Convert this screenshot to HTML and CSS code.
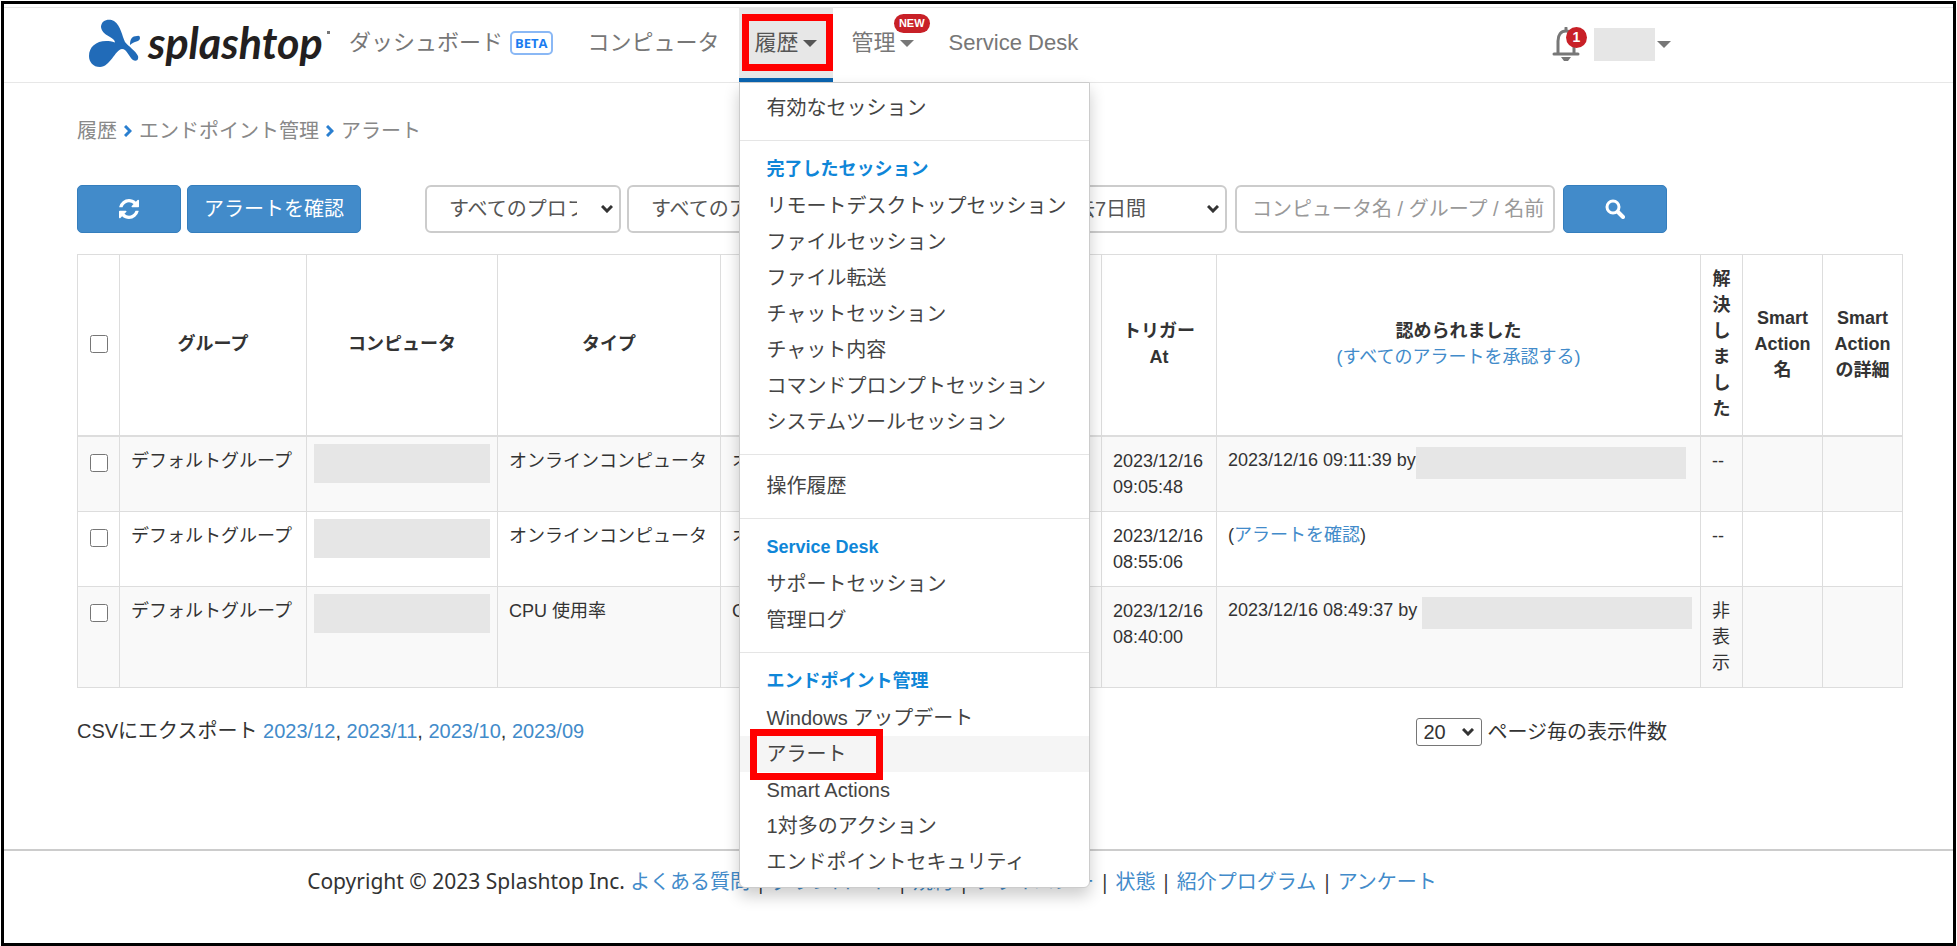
FILE: index.html
```html
<!DOCTYPE html>
<html lang="ja">
<head>
    <meta charset="utf-8">
    <title>アラート - Splashtop</title>
    <meta name="viewport" content="width=device-width, initial-scale=1">
    <link rel="stylesheet" href="styles.css">
</head>
<body>
<div class="page">
    <header class="navbar">
        <div class="navbar-inner">
            <a class="logo" href="#">
                <svg width="54" height="50" viewBox="0 0 54 50" aria-hidden="true">
                    <path fill="#216bb8" d="M1 37C1 26 12 19 27 23.500C27 18 14 17 13 8C13 1 21-1 26 2C33 7 34 17 37 23C40 27 48 32 50 37C51 41 48 43 45 41C41 38 39 30 34 30C27 31 22 48 12 48C5 48 1 43 1 37Z"/>
                    <path fill="#216bb8" d="M42 26C42 20 44 17 49 17Q52 16 52 19C52 23 46 22 42 26Z"/>
                </svg>
                <span class="logo-text">splashtop</span><span class="logo-dot"></span>
            </a>
            <nav class="nav">
                <a class="nav-link nav-dashboard" href="#">ダッシュボード<span class="beta">BETA</span></a>
                <a class="nav-link" href="#">コンピュータ</a>
                <div class="nav-item active">
                    <button class="nav-link" type="button" aria-expanded="true">履歴<span class="caret"></span></button>
                    <span class="mark mark-nav"></span>
                    <div class="dropdown">
                        <a href="#">有効なセッション</a>
                        <hr>
                        <h4>完了したセッション</h4>
                        <a href="#">リモートデスクトップセッション</a>
                        <a href="#">ファイルセッション</a>
                        <a href="#">ファイル転送</a>
                        <a href="#">チャットセッション</a>
                        <a href="#">チャット内容</a>
                        <a href="#">コマンドプロンプトセッション</a>
                        <a href="#">システムツールセッション</a>
                        <hr>
                        <a href="#">操作履歴</a>
                        <hr>
                        <h4>Service Desk</h4>
                        <a href="#">サポートセッション</a>
                        <a href="#">管理ログ</a>
                        <hr>
                        <h4>エンドポイント管理</h4>
                        <a href="#">Windows アップデート</a>
                        <a class="current" href="#">アラート<span class="mark mark-menu"></span></a>
                        <a href="#">Smart Actions</a>
                        <a href="#">1対多のアクション</a>
                        <a href="#">エンドポイントセキュリティ</a>
                    </div>
                </div>
                <div class="nav-item">
                    <button class="nav-link" type="button">管理<span class="caret"></span></button>
                    <span class="new">NEW</span>
                </div>
                <a class="nav-link" href="#">Service Desk</a>
            </nav>
            <div class="account">
                <button class="bell" type="button" aria-label="通知">
                    <svg width="28" height="34" viewBox="0 0 28 34" aria-hidden="true">
                        <path d="M14 1V4M2 27H26M6 27V14C6 8 9 4 14 4C19 4 22 8 22 14V27" fill="none" stroke="#777" stroke-width="3" stroke-linecap="round"/>
                        <path d="M9 30H19L16 34H12Z" fill="#777"/>
                    </svg>
                    <span class="count">1</span>
                </button>
                <button class="user" type="button" aria-label="アカウント"><span class="user-name"></span><span class="caret"></span></button>
            </div>
        </div>
    </header>

    <main class="content">
        <div class="breadcrumb">
            <a href="#">履歴</a>
            <svg width="8" height="12" viewBox="0 0 8 12" aria-hidden="true"><path d="M1 1L6 6L1 11"/></svg>
            <a href="#">エンドポイント管理</a>
            <svg width="8" height="12" viewBox="0 0 8 12" aria-hidden="true"><path d="M1 1L6 6L1 11"/></svg>
            <span>アラート</span>
        </div>

        <div class="toolbar">
            <div class="group">
                <button class="btn btn-icon" type="button" aria-label="更新">
                    <svg width="20" height="20" viewBox="0 0 1536 1536" aria-hidden="true"><path fill="#fff" d="M1511 928q0 5-1 7-64 268-268 434.500T764 1536q-146 0-282.500-55T238 1324l-129 129q-19 19-45 19t-45-19-19-45V960q0-26 19-45t45-19h448q26 0 45 19t19 45-19 45l-137 137q71 66 161 102t187 36q134 0 250-65t186-179q11-17 53-117 8-23 30-23h192q13 0 22.500 9.500t9.500 22.500zM1536 128v448q0 26-19 45t-45 19h-448q-26 0-45-19t-19-45 19-45l138-138Q969 256 768 256q-134 0-250 65T332 500q-11 17-53 117-8 23-30 23H50q-13 0-22.500-9.500T18 608v-7q65-268 270-434.500T768 0q146 0 284 55.500T1297 212l130-129q19-19 45-19t45 19 19 45z"/></svg>
                </button>
                <button class="btn btn-ack" type="button">アラートを確認</button>
            </div>
            <div class="group filters">
                <div class="select">
                    <select aria-label="プロファイル"><option>すべてのプロファイル</option></select>
                    <svg width="12" height="8" viewBox="0 0 12 8" aria-hidden="true"><path d="M1 1L6 6L11 1"/></svg>
                </div>
                <div class="select">
                    <select aria-label="アラートタイプ"><option>すべてのアラート</option></select>
                    <svg width="12" height="8" viewBox="0 0 12 8" aria-hidden="true"><path d="M1 1L6 6L11 1"/></svg>
                </div>
                <div class="select">
                    <select aria-label="状態"><option>すべて</option></select>
                    <svg width="12" height="8" viewBox="0 0 12 8" aria-hidden="true"><path d="M1 1L6 6L11 1"/></svg>
                </div>
                <div class="select">
                    <select aria-label="期間"><option>過去7日間</option></select>
                    <svg width="12" height="8" viewBox="0 0 12 8" aria-hidden="true"><path d="M1 1L6 6L11 1"/></svg>
                </div>
            </div>
            <input class="search" type="text" aria-label="検索" placeholder="コンピュータ名 / グループ / 名前">
            <button class="btn btn-icon" type="button" aria-label="検索">
                <svg width="20" height="20" viewBox="0 0 20 20" fill="none" stroke="#fff" stroke-width="3" aria-hidden="true"><circle cx="8" cy="8" r="6"/><path d="M13 13L18 18" stroke-width="4" stroke-linecap="round"/></svg>
            </button>
        </div>

        <table class="alerts">
            <colgroup>
                <col class="c-check"><col class="c-group"><col class="c-computer"><col class="c-type"><col class="c-name">
                <col class="c-time"><col><col class="c-resolved"><col class="c-action"><col class="c-action">
            </colgroup>
            <thead>
                <tr>
                    <th><input type="checkbox" aria-label="すべて選択"></th>
                    <th>グループ</th>
                    <th>コンピュータ</th>
                    <th>タイプ</th>
                    <th>アラート名</th>
                    <th>トリガー<br>At</th>
                    <th>認められました<br><a href="#">(すべてのアラートを承認する)</a></th>
                    <th>解決しました</th>
                    <th>Smart Action 名</th>
                    <th>Smart Action の詳細</th>
                </tr>
            </thead>
            <tbody>
                <tr>
                    <td class="check"><input type="checkbox" aria-label="選択"></td>
                    <td>デフォルトグループ</td>
                    <td class="computer"><span class="redacted"></span></td>
                    <td>オンラインコンピュータ</td>
                    <td>オンラインコンピュータ</td>
                    <td>2023/12/16<br>09:05:48</td>
                    <td class="ack">2023/12/16 09:11:39 by<span class="redacted"></span></td>
                    <td>--</td>
                    <td></td>
                    <td></td>
                </tr>
                <tr>
                    <td class="check"><input type="checkbox" aria-label="選択"></td>
                    <td>デフォルトグループ</td>
                    <td class="computer"><span class="redacted"></span></td>
                    <td>オンラインコンピュータ</td>
                    <td>オンラインコンピュータ</td>
                    <td>2023/12/16<br>08:55:06</td>
                    <td class="ack">(<a href="#">アラートを確認</a>)</td>
                    <td>--</td>
                    <td></td>
                    <td></td>
                </tr>
                <tr>
                    <td class="check"><input type="checkbox" aria-label="選択"></td>
                    <td>デフォルトグループ</td>
                    <td class="computer"><span class="redacted"></span></td>
                    <td>CPU 使用率</td>
                    <td>CPU 使用率</td>
                    <td>2023/12/16<br>08:40:00</td>
                    <td class="ack">2023/12/16 08:49:37 by <span class="redacted"></span></td>
                    <td>非表示</td>
                    <td></td>
                    <td></td>
                </tr>
            </tbody>
        </table>

        <div class="table-footer">
            <div>CSVにエクスポート <a href="#">2023/12</a>, <a href="#">2023/11</a>, <a href="#">2023/10</a>, <a href="#">2023/09</a></div>
            <div class="per-page">
                <div class="select">
                    <select id="per-page"><option>20</option></select>
                    <svg width="12" height="8" viewBox="0 0 12 8" aria-hidden="true"><path d="M1 1L6 6L11 1"/></svg>
                </div>
                <label for="per-page">ページ毎の表示件数</label>
            </div>
        </div>
    </main>

    <footer class="footer">
        <div class="footer-inner">
            <span class="copyright">Copyright © 2023 Splashtop Inc.</span> <a href="#">よくある質問</a> | <a href="#">ダウンロード</a> | <a href="#">規約</a> | <a href="#">プライバシー</a> | <a href="#">状態</a> | <a href="#">紹介プログラム</a> | <a href="#">アンケート</a>
        </div>
    </footer>
</div>
</body>
</html>
```

FILE: styles.css
```css
* {
    box-sizing: border-box;
}

body {
    margin: 0;
    padding: 1px;
    font-family: "Liberation Sans", "Noto Sans CJK JP", sans-serif;
    font-size: 20px;
    line-height: 26px;
    color: #333;
    background: #fff;
}

a {
    color: #428bca;
    text-decoration: none;
}

button, input, select {
    font: inherit;
    color: inherit;
}

.page {
    min-height: calc(100vh - 2px);
    padding-top: 3px;
    border: 3px solid #000;
}

/* navbar */
.navbar {
    border-top: 1px solid #e7e7e7;
    border-bottom: 1px solid #e7e7e7;
}

.navbar-inner {
    display: flex;
    max-width: 1667px;
    height: 74px;
    padding-left: 84px;
}

.logo {
    display: flex;
    align-items: flex-start;
    width: 245px;
    padding-top: 11px;
}

.logo-text {
    margin-left: 6px;
    font-family: Lato, sans-serif;
    font-size: 43px;
    font-weight: bold;
    font-style: italic;
    line-height: 48px;
    color: #231f20;
}

.logo-dot {
    width: 3px;
    height: 3px;
    margin: 12px 0 0 4px;
    background: #777;
}

.nav {
    display: flex;
    gap: 3px;
    font-size: 22px;
}

.nav-link {
    display: flex;
    align-items: center;
    height: 70px;
    padding: 0 16px;
    border: none;
    background: none;
    color: #777;
    white-space: nowrap;
}

.nav-item {
    position: relative;
}

.beta {
    margin-left: 7px;
    padding: 0 3px;
    border: 2px solid #8ab8f5;
    border-radius: 5px;
    font-family: "Open Sans", sans-serif;
    font-size: 13px;
    font-weight: bold;
    line-height: 20px;
    color: #1a7cf0;
}

.caret {
    margin-left: 4px;
    border: 7px solid transparent;
    border-top-color: currentColor;
    border-bottom: none;
}

.active {
    background: #e7e7e7;
    border-bottom: 4px solid #0a64b0;
}

.active > .nav-link {
    color: #555;
}

.new {
    position: absolute;
    top: 6px;
    right: 0;
    padding: 0 5px;
    border-radius: 10px;
    background: #c82027;
    color: #fff;
    font-size: 11px;
    font-weight: bold;
    line-height: 19px;
}

.mark {
    position: absolute;
    border: 7px solid #f00;
    pointer-events: none;
}

.mark-nav {
    top: 6px;
    right: 0;
    bottom: 7px;
    left: 3px;
}

.mark-menu {
    top: -7px;
    bottom: -8px;
    left: 10px;
    width: 133px;
}

/* dropdown menu */
.dropdown {
    position: absolute;
    top: 74px;
    left: 0;
    z-index: 10;
    width: 351px;
    padding: 7px 0;
    border: 1px solid #ccc;
    border-radius: 0 0 6px 6px;
    background: #fff;
    box-shadow: 0 8px 16px rgba(0, 0, 0, 0.2);
    font-size: 20px;
}

.dropdown a {
    display: block;
    position: relative;
    padding-left: 27px;
    line-height: 36px;
    color: #444;
}

.dropdown h4 {
    margin: 0;
    padding: 0 0 4px 27px;
    font-size: 18px;
    line-height: 30px;
    color: #0f86d8;
}

.dropdown hr {
    margin: 14px 0 13px;
    border: none;
    border-top: 1px solid #e5e5e5;
}

.dropdown .current {
    background: #f5f5f5;
}

/* account */
.account {
    display: flex;
    align-items: center;
    gap: 14px;
    height: 70px;
    margin-left: auto;
    padding-top: 2px;
    color: #777;
}

.account button {
    padding: 0;
    border: none;
    background: none;
}

.bell {
    position: relative;
    height: 34px;
}

.bell svg {
    display: block;
}

.count {
    position: absolute;
    top: 0;
    right: -7px;
    width: 21px;
    border-radius: 50%;
    background: #c82027;
    color: #fff;
    font-size: 14px;
    font-weight: bold;
    line-height: 21px;
}

.user {
    display: flex;
    align-items: center;
}

.user-name {
    width: 61px;
    height: 33px;
    background: #e6e6e6;
}

.user .caret {
    margin-left: 2px;
}

/* content */
.content {
    padding: 35px 50px 0 73px;
}

.breadcrumb {
    display: flex;
    align-items: center;
    gap: 7px;
    color: #888;
}

.breadcrumb a {
    color: inherit;
}

.breadcrumb svg, .select svg {
    fill: none;
    stroke: #2a7fd0;
    stroke-width: 3px;
}

.toolbar {
    display: flex;
    gap: 8px;
    max-width: 1590px;
    margin: 41px 0 21px;
}

.group {
    display: flex;
    gap: 6px;
}

.filters {
    margin-left: auto;
}

.btn {
    height: 48px;
    border: 1px solid #357ebd;
    border-radius: 5px;
    background: #428bca;
    color: #fff;
}

.btn svg {
    display: block;
    margin: 0 auto;
}

.btn-icon {
    width: 104px;
}

.btn-ack {
    padding: 0 16px;
}

.select {
    position: relative;
}

.select select {
    appearance: none;
    width: 196px;
    height: 48px;
    padding: 0 42px 0 22px;
    border: 2px solid #ccc;
    border-radius: 6px;
    background: #fff;
    color: #555;
}

.select svg {
    position: absolute;
    top: 20px;
    right: 8px;
    stroke: #333;
    pointer-events: none;
}

.search {
    width: 320px;
    height: 48px;
    padding: 0 0 0 15px;
    border: 2px solid #ccc;
    border-radius: 6px;
}

.search::placeholder {
    color: #999;
}

/* alerts table */
.alerts {
    width: 100%;
    table-layout: fixed;
    border-collapse: collapse;
    font-size: 18px;
}

.c-check {
    width: 42px;
}

.c-group {
    width: 187px;
}

.c-computer {
    width: 191px;
}

.c-type {
    width: 223px;
}

.c-name {
    width: 381px;
}

.c-time {
    width: 115px;
}

.c-resolved {
    width: 42px;
}

.c-action {
    width: 80px;
}

.alerts th, .alerts td {
    padding: 11px;
    border: 1px solid #ddd;
    vertical-align: top;
    text-align: left;
}

.alerts th {
    padding: 11px 10px 13px;
    border-bottom-width: 2px;
    vertical-align: middle;
    text-align: center;
}

.alerts th a {
    font-weight: normal;
}

.alerts tbody tr:nth-child(odd) {
    background: #f9f9f9;
}

.alerts input {
    display: block;
    width: 18px;
    height: 18px;
    margin: 0 auto;
}

.alerts .check {
    padding-top: 17px;
}

.alerts .computer {
    padding: 7px;
}

.redacted {
    display: inline-block;
    width: 270px;
    height: 32px;
    background: #e6e6e6;
    vertical-align: top;
}

.computer .redacted {
    display: block;
    width: 176px;
    height: 39px;
}

.alerts .ack {
    padding-top: 10px;
    white-space: nowrap;
}

.table-footer {
    display: flex;
    justify-content: space-between;
    max-width: 1590px;
    padding: 30px 0 103px;
}

.per-page {
    display: flex;
    align-items: center;
    gap: 5px;
}

.per-page .select select {
    display: block;
    width: 66px;
    height: 28px;
    padding: 0 6px;
    border: 1px solid #767676;
    border-radius: 3px;
    color: #333;
}

.per-page .select svg {
    top: 10px;
}

.footer {
    padding: 17px 0 48px 73px;
    border-top: 2px solid #ccc;
    font-family: "Noto Sans", "Noto Sans CJK JP", sans-serif;
}

.footer-inner {
    max-width: 1590px;
    text-align: center;
}

.copyright {
    font-size: 21px;
}
```
